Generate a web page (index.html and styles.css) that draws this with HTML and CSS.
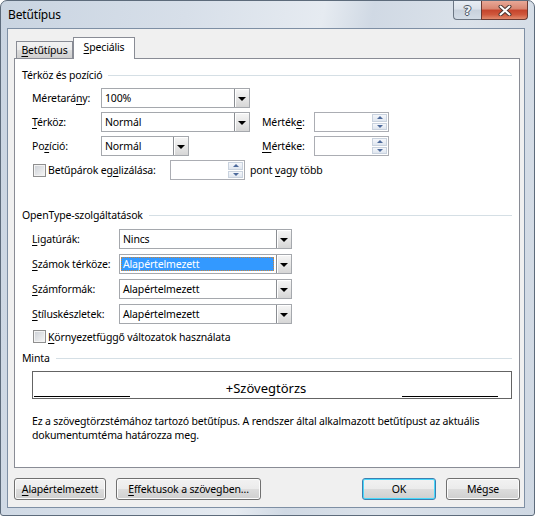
FILE: index.html
```html
<!DOCTYPE html>
<html lang="hu">
<head>
    <meta charset="UTF-8">
    <title>Betűtípus</title>
    <link rel="stylesheet" href="styles.css">
</head>
<body>
    <div class="window">
        <div class="titlebar">
            <span class="title">Betűtípus</span>
            <div class="caption">
                <span class="cap-btn help">?</span>
                <span class="cap-btn close">
                    <svg width="14" height="11" viewBox="0 0 14 11">
                        <path d="M2.5 1.5 L11.5 9.5 M11.5 1.5 L2.5 9.5" stroke="#4a3530" stroke-width="4" stroke-linecap="round"/>
                        <path d="M2.5 1.5 L11.5 9.5 M11.5 1.5 L2.5 9.5" stroke="#fff" stroke-width="2" stroke-linecap="round"/>
                    </svg>
                </span>
            </div>
        </div>

        <div class="client">
            <div class="tabs">
                <div class="tab"><u>B</u>etűtípus</div>
                <div class="tab active"><u>S</u>peciális</div>
            </div>

            <div class="page">
                <div class="group-title">Térköz és pozíció</div>
                <div class="group">
                    <div class="row">
                        <span class="lbl lbl-a">Méretará<u>n</u>y:</span>
                        <div class="combo w149"><span class="val">100%</span><span class="drop"></span></div>
                    </div>
                    <div class="row">
                        <span class="lbl lbl-a"><u>T</u>érköz:</span>
                        <div class="combo w149"><span class="val">Normál</span><span class="drop"></span></div>
                        <span class="lbl lbl-m gap12">Mérték<u>e</u>:</span>
                        <div class="spin"><span class="spin-val"></span><span class="arrows"><span class="up"></span><span class="down"></span></span></div>
                    </div>
                    <div class="row">
                        <span class="lbl lbl-a">Po<u>z</u>íció:</span>
                        <div class="combo w88"><span class="val">Normál</span><span class="drop"></span></div>
                        <span class="lbl lbl-m gap73"><u>M</u>értéke:</span>
                        <div class="spin"><span class="spin-val"></span><span class="arrows"><span class="up"></span><span class="down"></span></span></div>
                    </div>
                    <div class="row">
                        <span class="check"></span>
                        <span class="lbl lbl-k">Betűpárok eg<u>a</u>lizálása:</span>
                        <div class="spin"><span class="spin-val"></span><span class="arrows"><span class="up"></span><span class="down"></span></span></div>
                        <span class="lbl gap5">pont <u>v</u>agy több</span>
                    </div>
                </div>

                <div class="group-title second">OpenType-szolgáltatások</div>
                <div class="group loose">
                    <div class="row">
                        <span class="lbl lbl-o"><u>L</u>igatúrák:</span>
                        <div class="combo w173"><span class="val">Nincs</span><span class="drop"></span></div>
                    </div>
                    <div class="row">
                        <span class="lbl lbl-o"><u>S</u>zámok térköze:</span>
                        <div class="combo w173"><span class="val selected">Alapértelmezett</span><span class="drop"></span></div>
                    </div>
                    <div class="row">
                        <span class="lbl lbl-o"><u>S</u>zámformák:</span>
                        <div class="combo w173"><span class="val">Alapértelmezett</span><span class="drop"></span></div>
                    </div>
                    <div class="row">
                        <span class="lbl lbl-o"><u>S</u>tíluskészletek:</span>
                        <div class="combo w173"><span class="val">Alapértelmezett</span><span class="drop"></span></div>
                    </div>
                    <div class="row short">
                        <span class="check"></span>
                        <span class="lbl"><u>K</u>örnyezetfüggő változatok használata</span>
                    </div>
                </div>

                <div class="group-title third">Minta</div>
                <div class="group">
                    <div class="preview">
                        <span class="rule"></span>
                        <span class="sample">+Szövegtörzs</span>
                        <span class="rule"></span>
                    </div>
                    <p class="note">Ez a szövegtörzstémához tartozó betűtípus. A rendszer által alkalmazott betűtípust az aktuális dokumentumtéma határozza meg.</p>
                </div>
            </div>

            <div class="buttons">
                <button class="btn w92"><u>A</u>lapértelmezett</button>
                <button class="btn w145"><u>E</u>ffektusok a szövegben...</button>
                <span class="spacer"></span>
                <button class="btn default w74">OK</button>
                <button class="btn w74">Mégse</button>
            </div>
        </div>
    </div>
</body>
</html>
```

FILE: styles.css
```css
* {
    box-sizing: border-box;
}
body {
    margin: 0;
    font-family: "Segoe UI", "Noto Sans", sans-serif;
    font-size: 10.5px;
    letter-spacing: -0.15px;
    color: #000;
}
u {
    text-underline-offset: 2px;
}

/* window frame */
.window {
    width: 535px;
    height: 516px;
    border: 1px solid #5d6b7b;
    border-radius: 7px 7px 3px 3px;
    background: linear-gradient(100deg, #c9d4e1 0%, #d7dfe9 30%, #e6ebf1 52%, #d0d9e4 60%, #dbe2ea 75%, #cfd8e3 100%);
    padding: 0 9px 7px 6px;
    display: flex;
    flex-direction: column;
}
.titlebar {
    height: 27px;
    display: flex;
    justify-content: space-between;
    align-items: flex-start;
}
.title {
    padding: 6px 0 0 1px;
    line-height: 16px;
    font-size: 12px;
}
.caption {
    display: flex;
    margin-right: -3px;
}
.cap-btn {
    height: 19px;
    display: flex;
    align-items: center;
    justify-content: center;
    border: 1px solid #6c7683;
    border-top: 0;
}
.help {
    width: 28px;
    border-right: 0;
    border-radius: 0 0 0 4px;
    background: linear-gradient(#e8edf3, #dbe2ea 45%, #c8d1dc 50%, #d3dce6);
    color: #eef1f5;
    font-family: "DejaVu Sans", sans-serif;
    font-weight: bold;
    font-size: 13px;
    letter-spacing: 0;
    text-shadow: 1px 0 #4b5563, -1px 0 #4b5563, 0 1px #4b5563, 0 -1px #4b5563;
}
.close {
    width: 47px;
    border-radius: 0 0 4px 0;
    border-color: #6b3a33;
    background: linear-gradient(#e8a897, #d88570 45%, #c5432c 50%, #cf573c 75%, #e28a6d);
}

/* client area */
.client {
    flex: 1;
    border: 1px solid #7e8fa4;
    background: #f0f0f0;
    padding: 0 4px 0 6px;
}
.tabs {
    height: 29px;
    display: flex;
    align-items: flex-end;
    padding-left: 2px;
}
.tab {
    width: 57px;
    height: 17px;
    border: 1px solid #898c95;
    border-bottom: 0;
    background: linear-gradient(#f2f2f2, #ebebeb 50%, #dddddd 50%, #cfcfcf);
    text-align: center;
    line-height: 16px;
}
.tab.active {
    width: 62px;
    height: 22px;
    margin-bottom: -1px;
    background: #fff;
    line-height: 19px;
    position: relative;
    z-index: 1;
}
.page {
    height: 410px;
    border: 1px solid #898c95;
    background: #fff;
    padding: 9px 7px 0 7px;
}

/* groups */
.group-title {
    display: flex;
    align-items: center;
    height: 15px;
    line-height: 15px;
}
.group-title::after {
    content: "";
    flex: 1;
    height: 1px;
    margin-left: 6px;
    background: #d5dfe5;
}
.group-title.second {
    margin-top: 28px;
}
.group-title.third {
    margin-top: 8px;
}
.group {
    padding-left: 10px;
    padding-top: 5px;
    display: flex;
    flex-direction: column;
    gap: 4px;
}
.group.loose {
    padding-top: 6px;
    gap: 5px;
}
.row {
    height: 20px;
    display: flex;
    align-items: center;
}
.row.short {
    height: 13px;
    margin-top: 1px;
}
.lbl {
    white-space: nowrap;
}
.lbl-a { width: 69px; }
.lbl-m { width: 52px; }
.lbl-o { width: 87px; }
.lbl-k { width: 122px; }
.gap12 { margin-left: 12px; }
.gap73 { margin-left: 73px; }
.gap5 { margin-left: 5px; }

/* combo box */
.combo {
    height: 20px;
    border: 1px solid #a5a8ad;
    background: #fff;
    display: flex;
    align-items: stretch;
}
.w149 { width: 149px; }
.w88 { width: 88px; }
.w173 { width: 173px; }
.val {
    flex: 1;
    padding-left: 3px;
    line-height: 18px;
    white-space: nowrap;
}
.val.selected {
    margin: 2px 2px 2px 1px;
    padding-left: 2px;
    line-height: 14px;
    background: #3399ff;
    color: #fff;
    outline: 1px dotted #c9853c;
    outline-offset: -1px;
}
.drop {
    width: 15px;
    border-left: 1px solid #8a8d92;
    background: linear-gradient(#f6f6f6, #e4e4e4 60%, #d6d6d6);
    box-shadow: inset 1px 1px #fff;
    display: flex;
    align-items: center;
    justify-content: center;
}
.drop::before {
    content: "";
    border-left: 4px solid transparent;
    border-right: 4px solid transparent;
    border-top: 4px solid #000;
    margin-top: 1px;
}

/* spin box */
.spin {
    width: 75px;
    height: 20px;
    border: 1px solid #abadb3;
    background: #fff;
    display: flex;
}
.spin-val {
    flex: 1;
}
.arrows {
    width: 16px;
    display: flex;
    flex-direction: column;
    padding: 1px 1px 1px 0;
    gap: 1px;
}
.up, .down {
    flex: 1;
    border: 1px solid #c9d2de;
    background: linear-gradient(#f5f7fb, #dfe6ef);
    display: flex;
    align-items: center;
    justify-content: center;
}
.up::before {
    content: "";
    border-left: 3px solid transparent;
    border-right: 3px solid transparent;
    border-bottom: 3px solid #4d6a9c;
}
.down::before {
    content: "";
    border-left: 3px solid transparent;
    border-right: 3px solid transparent;
    border-top: 3px solid #4d6a9c;
}

/* check box */
.check {
    width: 13px;
    height: 13px;
    margin: 0 2px 0 1px;
    border: 1px solid #8f8f8f;
    background: linear-gradient(135deg, #cbcfd5, #f7f7f7);
    box-shadow: inset 0 0 0 1px #f3f3f3;
}

/* sample */
.preview {
    width: 480px;
    height: 28px;
    border: 1px solid #646464;
    display: flex;
    justify-content: space-between;
    align-items: flex-end;
    padding: 0 13px 1px 1px;
}
.rule {
    width: 96px;
    height: 1px;
    background: #000;
}
.sample {
    font-size: 13px;
    letter-spacing: 0;
    line-height: 18px;
}
.note {
    margin: 11px 0 0;
    width: 480px;
    line-height: 14px;
}

/* dialog buttons */
.buttons {
    display: flex;
    gap: 10px;
    margin-top: 10px;
}
.spacer {
    flex: 1;
}
.btn {
    height: 22px;
    font: inherit;
    letter-spacing: inherit;
    color: #000;
    border: 1px solid #707070;
    border-radius: 3px;
    background: linear-gradient(#f2f2f2, #ebebeb 50%, #dddddd 50%, #cfcfcf);
    box-shadow: inset 0 0 0 1px #fcfcfc;
    padding: 0;
}
.btn.default {
    border-color: #3c7fb1;
    box-shadow: inset 0 0 0 1px #48d8fb;
}
.w92 { width: 92px; }
.w145 { width: 145px; }
.w74 { width: 74px; }
```
